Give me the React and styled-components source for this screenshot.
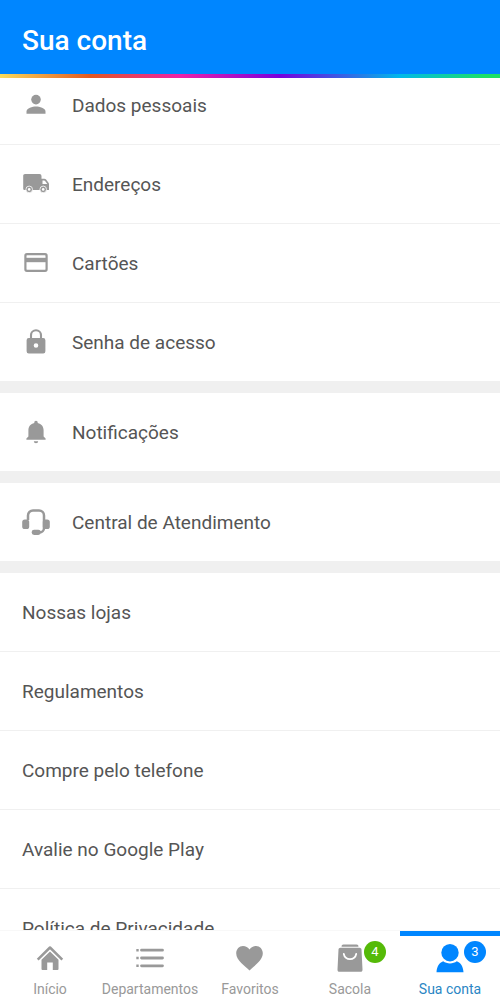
/* eslint-disable react/prop-types */
import styled, { createGlobalStyle, css } from "styled-components";

const groups = [
  [
    { label: "Dados pessoais", icon: PersonIcon },
    { label: "Endereços", icon: TruckIcon },
    { label: "Cartões", icon: CardIcon },
    { label: "Senha de acesso", icon: LockIcon },
  ],
  [{ label: "Notificações", icon: BellIcon }],
  [{ label: "Central de Atendimento", icon: HeadsetIcon }],
  [
    { label: "Nossas lojas" },
    { label: "Regulamentos" },
    { label: "Compre pelo telefone" },
    { label: "Avalie no Google Play" },
    { label: "Política de Privacidade" },
  ],
];

const tabs = [
  { label: "Início", icon: HomeIcon },
  { label: "Departamentos", icon: ListIcon },
  { label: "Favoritos", icon: HeartIcon },
  { label: "Sacola", icon: BagIcon, count: 4, color: "var(--green)" },
  { label: "Sua conta", icon: AccountIcon, count: 3, color: "var(--blue)", active: true },
];

export default function App() {
  return (
    <>
      <GlobalStyle />
      <StyledApp>
        <Header>
          <h1>Sua conta</h1>
        </Header>

        <Content>
          <Menu>
            {groups.map((items) => (
              <MenuGroup key={items[0].label}>
                {items.map((item) => (
                  <MenuItem key={item.label} {...item} />
                ))}
              </MenuGroup>
            ))}
          </Menu>
        </Content>

        <TabBar>
          {tabs.map((tab) => (
            <Tab key={tab.label} {...tab} />
          ))}
        </TabBar>
      </StyledApp>
    </>
  );
}

function MenuItem({ label, icon: Icon }) {
  return (
    <StyledMenuItem>
      <a href="#">
        {Icon && <Icon />}
        <span>{label}</span>
      </a>
    </StyledMenuItem>
  );
}

function Tab({ label, icon: Icon, count, color, active }) {
  return (
    <StyledTab href="#" $active={active} aria-current={active ? "page" : undefined}>
      <TabIcon>
        <Icon />
        {count && <Badge $color={color}>{count}</Badge>}
      </TabIcon>
      {label}
    </StyledTab>
  );
}

/********************* icons *************************/
function PersonIcon() {
  return (
    <svg width="28" height="28" viewBox="0 0 28 28" fill="currentColor" aria-hidden="true">
      <circle cx="14" cy="8.6" r="4.8" />
      <path d="M4.500 22.700v-2.200c0-3.400 6-5 9.500-5s9.500 1.600 9.500 5v2.200z" />
    </svg>
  );
}

function TruckIcon() {
  return (
    <svg width="28" height="28" viewBox="0 0 28 28" aria-hidden="true">
      <path
        fill="currentColor"
        fillRule="evenodd"
        d="M3 4h14.500a2 2 0 0 1 2 2v2.800h2.800c.8 0 1.400.3 1.800.8l2.400 3.200c.4.500.5.900.5 1.400v5.800H2.500A1.300 1.300 0 0 1 1.200 18.700V5.800C1.200 4.800 2 4 3 4zM20.500 10.400v3.600h4.800l-2.200-3.100a1.200 1.200 0 0 0-1-.5z"
      />
      <circle cx="7.200" cy="19.400" r="3.300" fill="currentColor" stroke="#fff" strokeWidth="0.800" />
      <circle cx="7.200" cy="19.400" r="1.300" fill="#fff" />
      <circle cx="21.200" cy="19.400" r="3.300" fill="currentColor" stroke="#fff" strokeWidth="0.800" />
      <circle cx="21.200" cy="19.400" r="1.300" fill="#fff" />
    </svg>
  );
}

function CardIcon() {
  return (
    <svg width="28" height="28" viewBox="0 0 28 28" aria-hidden="true">
      <rect
        x="3.400"
        y="5.200"
        width="21.200"
        height="16.600"
        rx="1.500"
        fill="none"
        stroke="currentColor"
        strokeWidth="2.200"
      />
      <path d="M3.500 8.800h21v4.400h-21z" fill="currentColor" />
    </svg>
  );
}

function LockIcon() {
  return (
    <svg width="28" height="28" viewBox="0 0 28 28" aria-hidden="true">
      <path
        d="M9 12V7.200a5 5 0 0 1 10 0V12"
        fill="none"
        stroke="currentColor"
        strokeWidth="2.100"
      />
      <path
        fill="currentColor"
        fillRule="evenodd"
        d="M6.800 10h14.400a2.200 2.200 0 0 1 2.200 2.200v11.100a2.200 2.200 0 0 1-2.200 2.200H6.800a2.200 2.200 0 0 1-2.200-2.200V12.200A2.200 2.200 0 0 1 6.800 10zM14 15.200a2.300 2.300 0 1 0 0 4.600 2.300 2.300 0 0 0 0-4.600z"
      />
    </svg>
  );
}

function BellIcon() {
  return (
    <svg width="28" height="28" viewBox="0 0 28 28" fill="currentColor" aria-hidden="true">
      <path d="M14 2.800c1 0 1.700.7 1.700 1.700v.5c3.700.8 5.900 3.700 5.900 7.300v6.200l2 2v1.300H4.400v-1.300l2-2v-6.200c0-3.600 2.200-6.500 5.900-7.300v-.5c0-1 .7-1.700 1.700-1.700z" />
      <path d="M11.800 23.300h4.400a2.200 1.900 0 0 1-4.400 0z" />
    </svg>
  );
}

function HeadsetIcon() {
  return (
    <svg width="28" height="28" viewBox="0 0 28 28" aria-hidden="true">
      <path
        d="M6 12V7.500a5 5 0 0 1 5-5h6a5 5 0 0 1 5 5V20a4.500 4.500 0 0 1-4.500 4.500H14"
        fill="none"
        stroke="currentColor"
        strokeWidth="2.500"
      />
      <rect x="0.200" y="11.500" width="7" height="9.500" rx="2.600" fill="currentColor" />
      <rect x="20.800" y="11.500" width="7" height="9.500" rx="2.600" fill="currentColor" />
      <rect x="9.700" y="21.700" width="9" height="5.300" rx="2.400" fill="currentColor" />
    </svg>
  );
}

function HomeIcon() {
  return (
    <svg width="30" height="30" viewBox="0 0 30 30" aria-hidden="true">
      <path
        d="M2.700 16.700 15 4.500l12.300 12.200"
        fill="none"
        stroke="currentColor"
        strokeWidth="2.500"
        strokeLinejoin="round"
      />
      <path
        d="M6.500 16.800 15 8.500l8.500 8.300V26a1 1 0 0 1-1 1h-4.700v-7.500h-5.600V27H7.500a1 1 0 0 1-1-1z"
        fill="currentColor"
      />
    </svg>
  );
}

function ListIcon() {
  return (
    <svg width="30" height="30" viewBox="0 0 30 30" aria-hidden="true">
      <path
        d="M6.500 7.200h21M6.500 15h21M6.500 22.800h21"
        stroke="currentColor"
        strokeWidth="2.800"
        strokeLinecap="round"
      />
      <path
        d="M1.300 7.200h2.400M1.300 15h2.400M1.300 22.800h2.400"
        stroke="currentColor"
        strokeWidth="2.600"
      />
    </svg>
  );
}

function HeartIcon() {
  return (
    <svg width="30" height="30" viewBox="0 0 30 30" fill="currentColor" aria-hidden="true">
      <path d="M14.500 27.500C10.300 23.300 1.200 17.500 1.200 10.300 1.200 6.100 4.200 3 8 3c2.700 0 5 1.300 6.500 3.500C16 4.300 18.300 3 21 3c3.800 0 6.800 3.100 6.800 7.300 0 7.200-9.100 13-13.300 17.200z" />
    </svg>
  );
}

function BagIcon() {
  return (
    <svg width="30" height="30" viewBox="0 0 30 30" aria-hidden="true">
      <path d="M8.500 1.500h13a2 2 0 0 1 2 2.200h-17a2 2 0 0 1 2-2.200z" fill="currentColor" />
      <path
        d="M5.500 4.800h19c1.100 0 1.900.7 2 1.800l1 19.900c.1 1.400-.7 2.300-2 2.300h-21c-1.300 0-2.100-.9-2-2.300l1-19.900c.1-1.100.9-1.800 2-1.800z"
        fill="currentColor"
      />
      <path
        d="M8.800 11a6.300 6.300 0 0 0 12.400 0"
        fill="none"
        stroke="#fff"
        strokeWidth="1.800"
        strokeLinecap="round"
      />
    </svg>
  );
}

function AccountIcon() {
  return (
    <svg width="30" height="30" viewBox="0 0 30 30" fill="currentColor" aria-hidden="true">
      <circle cx="15" cy="9.700" r="8.700" />
      <path d="M8.200 18.300c1.900 1.500 4.200 2.100 6.800 2.100s4.900-.6 6.800-2.100c3.900 1.500 6.300 5 6.700 11H1.500c.4-6 2.800-9.500 6.700-11z" />
    </svg>
  );
}

/********************* styled component *************************/
const GlobalStyle = createGlobalStyle`
  :root {
    --blue: #0086ff;
    --green: #55ba08;
    --text: #555;
    --icon: #999;
    --line: #f0f0f0;
  }

  * {
    box-sizing: border-box;
    margin: 0;
    padding: 0;
  }

  body {
    background: #fff;
    color: var(--text);
    font-family: Roboto, "Liberation Sans", sans-serif;
  }

  a {
    color: inherit;
    text-decoration: none;
  }

  ul {
    list-style: none;
  }
`;

const StyledApp = styled.div`
  display: flex;
  flex-direction: column;
  height: 100vh;
`;

const Header = styled.header`
  background: var(--blue);
  color: #fff;
  flex-shrink: 0;

  h1 {
    font-size: 28px;
    font-weight: 500;
    line-height: 32px;
    padding: 25px 22px 17px;
  }

  &::after {
    background: linear-gradient(
      to right,
      #fbdc5c,
      #e2581f 18%,
      #ee22a8 36%,
      #7800dc 56%,
      #00b8ea 80%,
      #1ce066 97%
    );
    content: "";
    display: block;
    height: 4px;
  }
`;

const Content = styled.main`
  flex: 1;
  min-height: 0;
  overflow-y: auto;
  scrollbar-width: none;
`;

const Menu = styled.div`
  background: var(--line);
  display: flex;
  flex-direction: column;
  gap: 12px;
  margin-top: -12px;
`;

const MenuGroup = styled.ul`
  background: #fff;
`;

const StyledMenuItem = styled.li`
  & + & {
    border-top: 1px solid var(--line);
  }

  a {
    align-items: center;
    display: flex;
    font-size: 19px;
    gap: 22px;
    height: 78px;
    line-height: 24px;
    padding: 0 22px;
  }

  span {
    padding-top: 2px;
  }

  svg {
    color: var(--icon);
    flex-shrink: 0;
  }
`;

const TabBar = styled.nav`
  background: #fff;
  border-top: 1px solid #f8f8f8;
  display: grid;
  flex-shrink: 0;
  grid-template-columns: repeat(5, 1fr);
`;

const StyledTab = styled.a`
  align-items: center;
  border-top: 5px solid transparent;
  color: var(--icon);
  display: flex;
  flex-direction: column;
  font-size: 14px;
  gap: 7px;
  line-height: 18px;
  padding: 7px 0 10px;
  white-space: nowrap;

  ${(props) =>
    props.$active &&
    css`
      border-top-color: var(--blue);
      color: #2a86c4;
    `}

  svg {
    color: ${(props) => (props.$active ? "var(--blue)" : "var(--icon)")};
    display: block;
  }
`;

const TabIcon = styled.span`
  position: relative;
`;

const Badge = styled.span`
  background: ${(props) => props.$color};
  border-radius: 50%;
  color: #fff;
  font-size: 13px;
  height: 22px;
  left: 29px;
  line-height: 22px;
  position: absolute;
  text-align: center;
  top: -2px;
  width: 22px;
`;
